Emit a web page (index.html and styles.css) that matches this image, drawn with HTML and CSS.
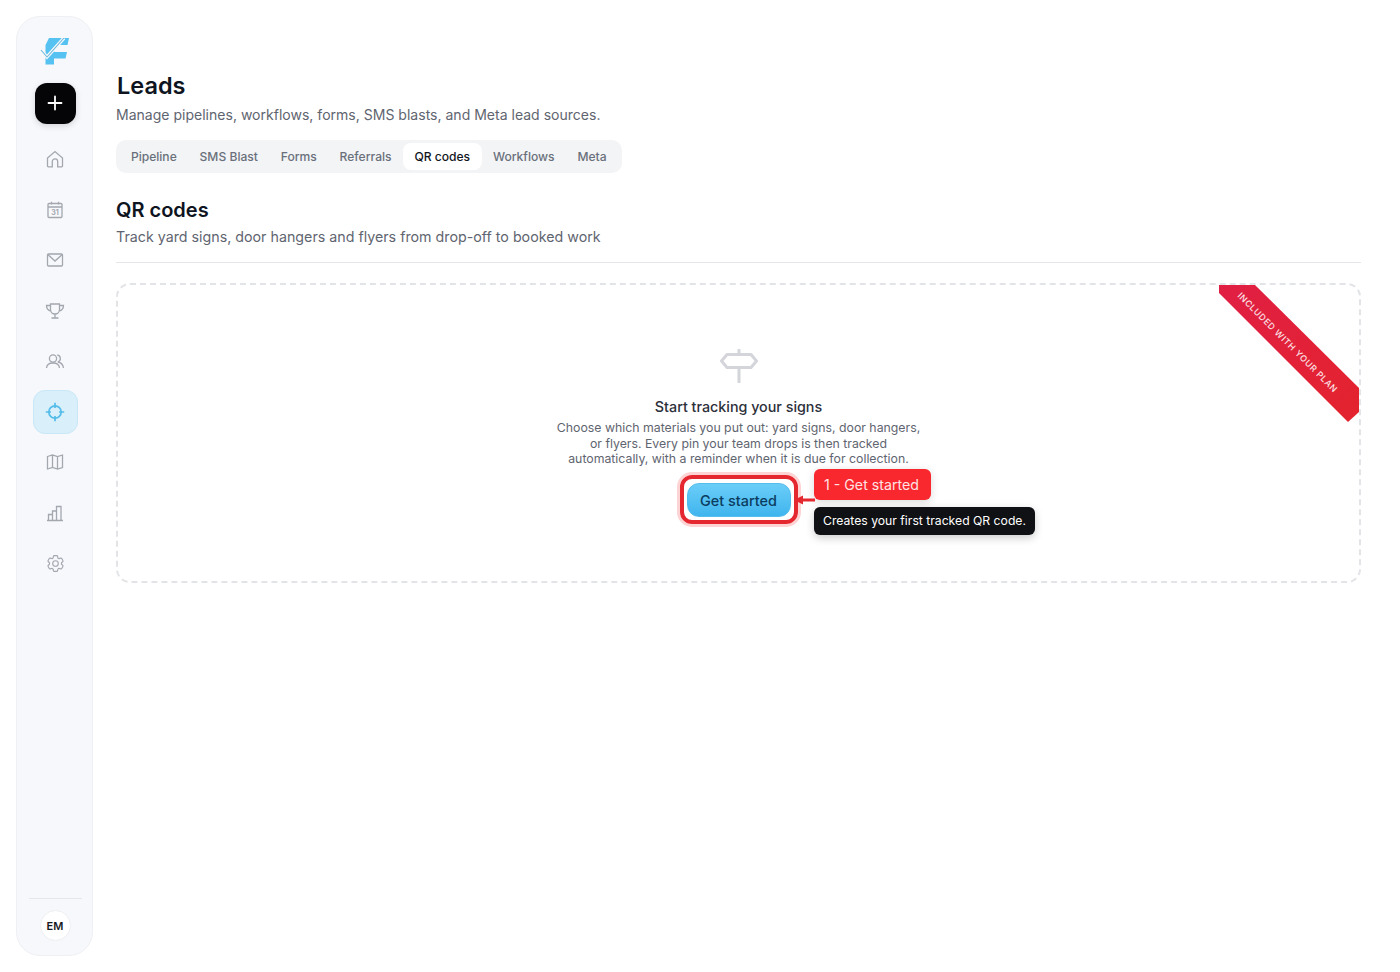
FILE: index.html
```html
<!DOCTYPE html>
<html lang="en">
<head>
    <meta charset="UTF-8">
    <title>Leads - QR codes</title>
    <link rel="stylesheet" href="styles.css">
</head>
<body>
<div class="app">
    <aside class="sidebar">
        <svg class="logo" width="30" height="28" viewBox="0 0 30 28">
            <path d="M9 0 H29 L27.5 7 H17 L14 14 H27 L25.5 20.5 H14 V26.5 H5.5 V7 Z" fill="#55c2f2"/>
            <path d="M1 12 L7 19 L24 0" fill="none" stroke="#f7f8fb" stroke-width="3.4"/>
            <path d="M1 12 L7 19 L24 0" fill="none" stroke="#6cb9dc" stroke-width="1.1"/>
        </svg>
        <div class="add-btn">
            <svg width="16" height="16" viewBox="0 0 16 16"><path d="M8 1.5 V14.5 M1.5 8 H14.5" stroke="#fff" stroke-width="1.8" stroke-linecap="round"/></svg>
        </div>
        <nav class="nav">
            <a class="nav-item">
                <svg width="20" height="20" viewBox="0 0 20 20"><path d="M2.5 9 L10 2.5 L17.5 9 V17 a.8 .8 0 0 1 -.8 .8 H12.7 V12.5 a2.7 2.7 0 0 0 -5.4 0 V17.8 H3.3 a.8 .8 0 0 1 -.8 -.8 Z"/></svg>
            </a>
            <a class="nav-item">
                <svg width="20" height="20" viewBox="0 0 20 20"><rect x="3" y="3.5" width="14" height="14" rx="1"/><path d="M3 7 H17 M6.5 1.8 V4.5 M13.5 1.8 V4.5"/><text x="10" y="15.2" class="cal-day">31</text></svg>
            </a>
            <a class="nav-item">
                <svg width="20" height="20" viewBox="0 0 20 20"><rect x="2.5" y="4" width="15" height="12" rx="1"/><path d="M2.8 4.5 L10 11 L17.2 4.5"/></svg>
            </a>
            <a class="nav-item">
                <svg width="20" height="20" viewBox="0 0 20 20"><path d="M5.5 3 H14.5 V8.5 a4.5 4.5 0 0 1 -9 0 Z M10 13 V16.5 M6.5 17 H13.5 M5.5 4.5 H1.5 C1.5 8 3.5 9.5 6 10 M14.5 4.5 H18.5 C18.5 8 16.5 9.5 14 10"/></svg>
            </a>
            <a class="nav-item">
                <svg width="20" height="20" viewBox="0 0 20 20"><circle cx="8" cy="7.5" r="3.6"/><path d="M1.5 17 C1.8 13.5 4.5 12 8 12 S14.2 13.5 14.5 17 M12.3 4 a3.6 3.6 0 0 1 .5 7 C15.8 11.5 18 13.5 18.5 17"/></svg>
            </a>
            <a class="nav-item active">
                <svg width="20" height="20" viewBox="0 0 20 20"><circle cx="10" cy="10" r="6.2"/><path d="M10 .8 V6 M10 14 V19.2 M.8 10 H6 M14 10 H19.2"/></svg>
            </a>
            <a class="nav-item">
                <svg width="20" height="20" viewBox="0 0 20 20"><path d="M2.5 4.5 L7.5 3 L12.5 4.5 L17.5 3 V15.5 L12.5 17 L7.5 15.5 L2.5 17 Z M7.5 3 V15.5 M12.5 4.5 V17"/></svg>
            </a>
            <a class="nav-item">
                <svg width="20" height="20" viewBox="0 0 20 20"><path d="M2 17.5 H18 M3.5 17.5 V11.5 H7.5 V17.5 M7.5 17.5 V8 H11.5 V17.5 M11.5 17.5 V3.5 H16 V17.5"/></svg>
            </a>
            <a class="nav-item">
                <svg width="21" height="21" viewBox="0 0 24 24"><path d="M9.594 3.94c.09-.542.56-.94 1.11-.94h2.593c.55 0 1.02.398 1.11.94l.213 1.281c.063.374.313.686.645.87.074.04.147.083.22.127.325.196.72.257 1.075.124l1.217-.456a1.125 1.125 0 0 1 1.37.49l1.296 2.247a1.125 1.125 0 0 1-.26 1.431l-1.003.827c-.293.241-.438.613-.43.992a7.723 7.723 0 0 1 0 .255c-.008.378.137.75.43.991l1.004.827c.424.35.534.955.26 1.43l-1.298 2.247a1.125 1.125 0 0 1-1.369.491l-1.217-.456c-.355-.133-.75-.072-1.076.124a6.47 6.47 0 0 1-.22.128c-.331.183-.581.495-.644.869l-.213 1.281c-.09.543-.56.94-1.11.94h-2.594c-.55 0-1.019-.398-1.11-.94l-.213-1.281c-.062-.374-.312-.686-.644-.87a6.52 6.52 0 0 1-.22-.127c-.325-.196-.72-.257-1.076-.124l-1.217.456a1.125 1.125 0 0 1-1.369-.49l-1.297-2.247a1.125 1.125 0 0 1 .26-1.431l1.004-.827c.292-.24.437-.613.43-.991a6.932 6.932 0 0 1 0-.255c.007-.38-.138-.751-.43-.992l-1.004-.827a1.125 1.125 0 0 1-.26-1.43l1.297-2.247a1.125 1.125 0 0 1 1.37-.491l1.216.456c.356.133.751.072 1.076-.124.072-.044.146-.086.22-.128.332-.183.582-.495.644-.869l.214-1.28Z"/><circle cx="12" cy="12" r="3.2"/></svg>
            </a>
        </nav>
        <div class="sidebar-foot">
            <div class="avatar">EM</div>
        </div>
    </aside>

    <main class="main">
        <h1 class="page-title">Leads</h1>
        <p class="page-sub">Manage pipelines, workflows, forms, SMS blasts, and Meta lead sources.</p>
        <div class="tabs">
            <span class="tab">Pipeline</span>
            <span class="tab">SMS Blast</span>
            <span class="tab">Forms</span>
            <span class="tab">Referrals</span>
            <span class="tab tab-on">QR codes</span>
            <span class="tab">Workflows</span>
            <span class="tab">Meta</span>
        </div>

        <div class="section-head">
            <h2 class="section-title">QR codes</h2>
            <p class="section-sub">Track yard signs, door hangers and flyers from drop-off to booked work</p>
        </div>

        <section class="empty">
            <div class="ribbon"><span class="ribbon-text">INCLUDED WITH YOUR PLAN</span></div>
            <svg class="sign-icon" width="38" height="34" viewBox="0 0 38 34">
                <path d="M19 1 V5 M19 19 V33 M7 5.5 H31 L36.5 12 L31 18.5 H7 L1.5 12 Z" fill="none" stroke="#d3d5da" stroke-width="3" stroke-linejoin="round" stroke-linecap="round"/>
            </svg>
            <h3 class="empty-title">Start tracking your signs</h3>
            <p class="empty-text">Choose which materials you put out: yard signs, door hangers,<br>or flyers. Every pin your team drops is then tracked<br>automatically, with a reminder when it is due for collection.</p>
            <div class="cta">
                <button class="start-btn">Get started</button>
                <div class="spotlight"></div>
                <div class="callout">1 - Get started</div>
                <svg class="callout-arrow" width="22" height="10" viewBox="0 0 22 10"><path d="M21 5 H7" stroke="#e5282f" stroke-width="3"/><path d="M0 5 L9 .5 V9.5 Z" fill="#e5282f"/></svg>
                <div class="hint">Creates your first tracked QR code.</div>
            </div>
        </section>
    </main>
</div>
</body>
</html>
```

FILE: styles.css
```css
* {
    box-sizing: border-box;
}

body {
    margin: 0;
    background-color: #ffffff;
    font-family: "Inter", "Open Sans", sans-serif;
    color: #0e1420;
}

.app {
    display: flex;
    height: 972px;
    padding: 16px 39px 16px 16px;
    gap: 23px;
}

/* sidebar */
.sidebar {
    display: flex;
    flex-direction: column;
    align-items: center;
    flex: none;
    width: 77px;
    height: 940px;
    padding: 21px 0 0 1px;
    background-color: #f7f8fb;
    border: 1px solid #eff0f3;
    border-radius: 24px;
}

.logo {
    flex: none;
}

.add-btn {
    display: flex;
    align-items: center;
    justify-content: center;
    flex: none;
    width: 41px;
    height: 41px;
    margin-top: 16.5px;
    background-color: #050507;
    border-radius: 12px;
    box-shadow: 0 2px 6px rgba(0, 0, 0, 0.15);
}

.nav {
    display: flex;
    flex-direction: column;
    align-items: center;
    gap: 6px;
    margin-top: 13.5px;
}

.nav-item {
    display: flex;
    align-items: center;
    justify-content: center;
    width: 45px;
    height: 44.5px;
    border-radius: 12px;
}

.nav-item svg {
    fill: none;
    stroke: #a3a7af;
    stroke-width: 1.3;
}

.cal-day {
    font-size: 7px;
    font-weight: 700;
    fill: #a3a7af;
    stroke: none;
    text-anchor: middle;
}

.nav-item.active {
    background-color: #d9effa;
    border: 1px solid #c8e8f8;
}

.nav-item.active svg {
    stroke: #55bde9;
    stroke-width: 1.7;
}

.sidebar-foot {
    display: flex;
    justify-content: center;
    width: 53px;
    margin-top: auto;
    padding: 11px 0 14px;
    border-top: 1px solid #e6e7ea;
}

.avatar {
    display: flex;
    align-items: center;
    justify-content: center;
    width: 31px;
    height: 31px;
    background-color: #ffffff;
    border: 1px solid #eeeff1;
    border-radius: 50%;
    font-size: 11px;
    font-weight: 600;
    color: #15171c;
}

/* main column */
.main {
    flex: 1;
    min-width: 0;
    padding-top: 55px;
}

.page-title {
    margin: 0;
    padding-left: 1px;
    font-size: 23.5px;
    line-height: 30px;
    font-weight: 600;
}

.page-sub {
    margin: 4px 0 0;
    font-size: 14.04px;
    line-height: 20px;
    color: #5f6570;
}

.tabs {
    display: inline-flex;
    height: 33px;
    margin-top: 15px;
    padding: 3px 4px 3px 3.5px;
    background-color: #f3f4f6;
    border-radius: 10px;
}

.tab {
    display: flex;
    align-items: center;
    padding: 0 11.4px;
    font-size: 12.1px;
    font-weight: 500;
    color: #69707b;
    border-radius: 8px;
}

.tab-on {
    background-color: #ffffff;
    color: #11151c;
}

.section-head {
    height: 67px;
    margin-top: 23px;
    border-bottom: 1px solid #e5e6e9;
}

.section-title {
    margin: 0;
    font-size: 20px;
    line-height: 28px;
    font-weight: 600;
}

.section-sub {
    margin: 3px 0 0;
    font-size: 14.26px;
    line-height: 20px;
    color: #5f6570;
}

/* empty state */
.empty {
    position: relative;
    display: flex;
    flex-direction: column;
    align-items: center;
    height: 300px;
    margin-top: 20px;
    padding-top: 64px;
    border: 2px dashed #e3e4e7;
    border-radius: 14px;
}

.ribbon {
    position: absolute;
    top: 0;
    right: 0;
    width: 140px;
    height: 137px;
    background: linear-gradient(135deg, #e01f44, #e4232e);
    clip-path: polygon(0 0, 36px 0, 140px 103px, 140px 127px, 129px 137px, 0 8px);
}

.ribbon-text {
    position: absolute;
    top: 49px;
    left: 0.5px;
    width: 130px;
    transform: rotate(45deg);
    font-size: 8.7px;
    font-weight: 500;
    letter-spacing: 0.65px;
    line-height: 12px;
    text-align: center;
    color: #fbe4e8;
    white-space: nowrap;
}

.sign-icon {
    flex: none;
}

.empty-title {
    margin: 13px 0 0;
    font-size: 14.3px;
    line-height: 22px;
    font-weight: 500;
    color: #2c303a;
}

.empty-text {
    margin: 2px 0 0;
    font-size: 12.3px;
    line-height: 15.7px;
    text-align: center;
    color: #5f6570;
}

.cta {
    position: relative;
    margin-top: 16px;
}

.start-btn {
    display: block;
    width: 104px;
    height: 34px;
    padding: 0;
    background: linear-gradient(180deg, #6bcdf8, #3fb5ee);
    border: 1px solid #55bdec;
    border-radius: 12px;
    font-family: inherit;
    font-size: 14.4px;
    font-weight: 500;
    color: #0b3c5f;
}

.spotlight {
    position: absolute;
    top: -8px;
    right: -7px;
    bottom: -7px;
    left: -7px;
    border: 4px solid #e5282f;
    border-radius: 12px;
    box-shadow: 0 0 0 3px #fdd3d3;
}

.callout {
    position: absolute;
    top: -14px;
    left: 127px;
    width: 117px;
    height: 31px;
    padding-left: 10.5px;
    background-color: #f9272e;
    border-radius: 6px;
    box-shadow: 0 2px 8px rgba(0, 0, 0, 0.15);
    font-size: 14.2px;
    line-height: 31px;
    color: #ffe3e3;
    white-space: nowrap;
}

.callout-arrow {
    position: absolute;
    top: 12px;
    left: 107px;
}

.hint {
    position: absolute;
    top: 24px;
    left: 127px;
    width: 221px;
    height: 28px;
    padding-left: 9.5px;
    background-color: #101114;
    border-radius: 6px;
    box-shadow: 0 3px 8px rgba(0, 0, 0, 0.2);
    font-size: 12.2px;
    line-height: 28px;
    color: #ffffff;
    white-space: nowrap;
}
```
